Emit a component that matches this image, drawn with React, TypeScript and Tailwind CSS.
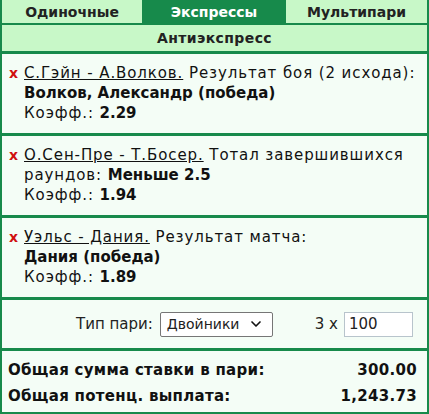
import { ChevronDown } from "lucide-react";

const bets = [
  {
    event: "С.Гэйн - А.Волков.",
    market: ["Результат боя (2 исхода):"],
    pick: "Волков, Александр (победа)",
    odds: "2.29",
  },
  {
    event: "О.Сен-Пре - Т.Босер.",
    market: ["Тотал завершившихся", "раундов:"],
    pick: "Меньше 2.5",
    odds: "1.94",
  },
  {
    event: "Уэльс - Дания.",
    market: ["Результат матча:"],
    pick: "Дания (победа)",
    odds: "1.89",
  },
];

export default function App() {
  return (
    <div
      className="w-[429px] h-[414px] bg-[#f4fdf6] text-[15px] leading-[20px] text-[#111]"
      style={{ fontFamily: '"DejaVu Sans", "Liberation Sans", sans-serif' }}
    >
      <div className="border-x-2 border-b-2 border-[#178a4b] h-full flex flex-col">
        {/* Tabs */}
        <div className="grid grid-cols-[140px_144px_1fr] h-[23px] font-bold text-[14px]">
          <div className="bg-[#c8f8c8] flex items-center justify-center text-[#222]">Одиночные</div>
          <div className="bg-[#178a4b] flex items-center justify-center text-white">Экспрессы</div>
          <div className="bg-[#c8f8c8] flex items-center justify-center text-[#222]">Мультипари</div>
        </div>
        <div className="h-[2px] bg-[#178a4b]" />
        <div className="bg-[#c8f8c8] h-[26px] flex items-center justify-center font-bold text-[14px] tracking-[0.4px] text-[#222]">
          Антиэкспресс
        </div>
        <div className="h-[3px] bg-[#178a4b]" />

        {bets.map((b) => (
          <div key={b.event}>
            <div className="flex pl-[7px] pt-[9px] h-[79px]">
              <span className="w-[15px] shrink-0 text-[#d01010] font-bold text-[14px]">x</span>
              <div className="tracking-[0.9px]">
                <div>
                  <span className="underline">{b.event}</span> <span>{b.market[0]}</span>
                  <br />
                  {b.market[1] ? <span>{b.market[1]} </span> : null}
                  <span className="font-bold tracking-normal">{b.pick}</span>
                </div>
                <div>
                  Коэфф.: <span className="font-bold tracking-normal">{b.odds}</span>
                </div>
              </div>
            </div>
            <div className="h-[3px] bg-[#178a4b]" />
          </div>
        ))}

        {/* Bet type */}
        <div className="h-[48px] flex items-center pl-[74px] text-[#222]">
          <span>Тип пари:</span>
          <div className="ml-[7px] w-[113px] h-[25px] border border-[#767676] rounded-[2px] bg-white flex items-center justify-between pl-[6px] pr-[8px] text-[14px]">
            <span>Двойники</span>
            <ChevronDown size={16} strokeWidth={2.5} className="text-[#111]" />
          </div>
          <span className="ml-[42px]">3 x</span>
          <div className="ml-[6px] w-[69px] h-[25px] border border-[#b8c4cc] bg-white flex items-center pl-[4px]">
            100
          </div>
        </div>
        <div className="h-[3px] bg-[#178a4b]" />

        {/* Totals */}
        <div className="flex-1 pl-[6px] pr-[10px] pt-[6px] font-bold text-[#111] leading-[26px] tracking-[0.3px]">
          <div className="flex justify-between">
            <span>Общая сумма ставки в пари:</span>
            <span>300.00</span>
          </div>
          <div className="flex justify-between">
            <span>Общая потенц. выплата:</span>
            <span>1,243.73</span>
          </div>
        </div>
      </div>
    </div>
  );
}
